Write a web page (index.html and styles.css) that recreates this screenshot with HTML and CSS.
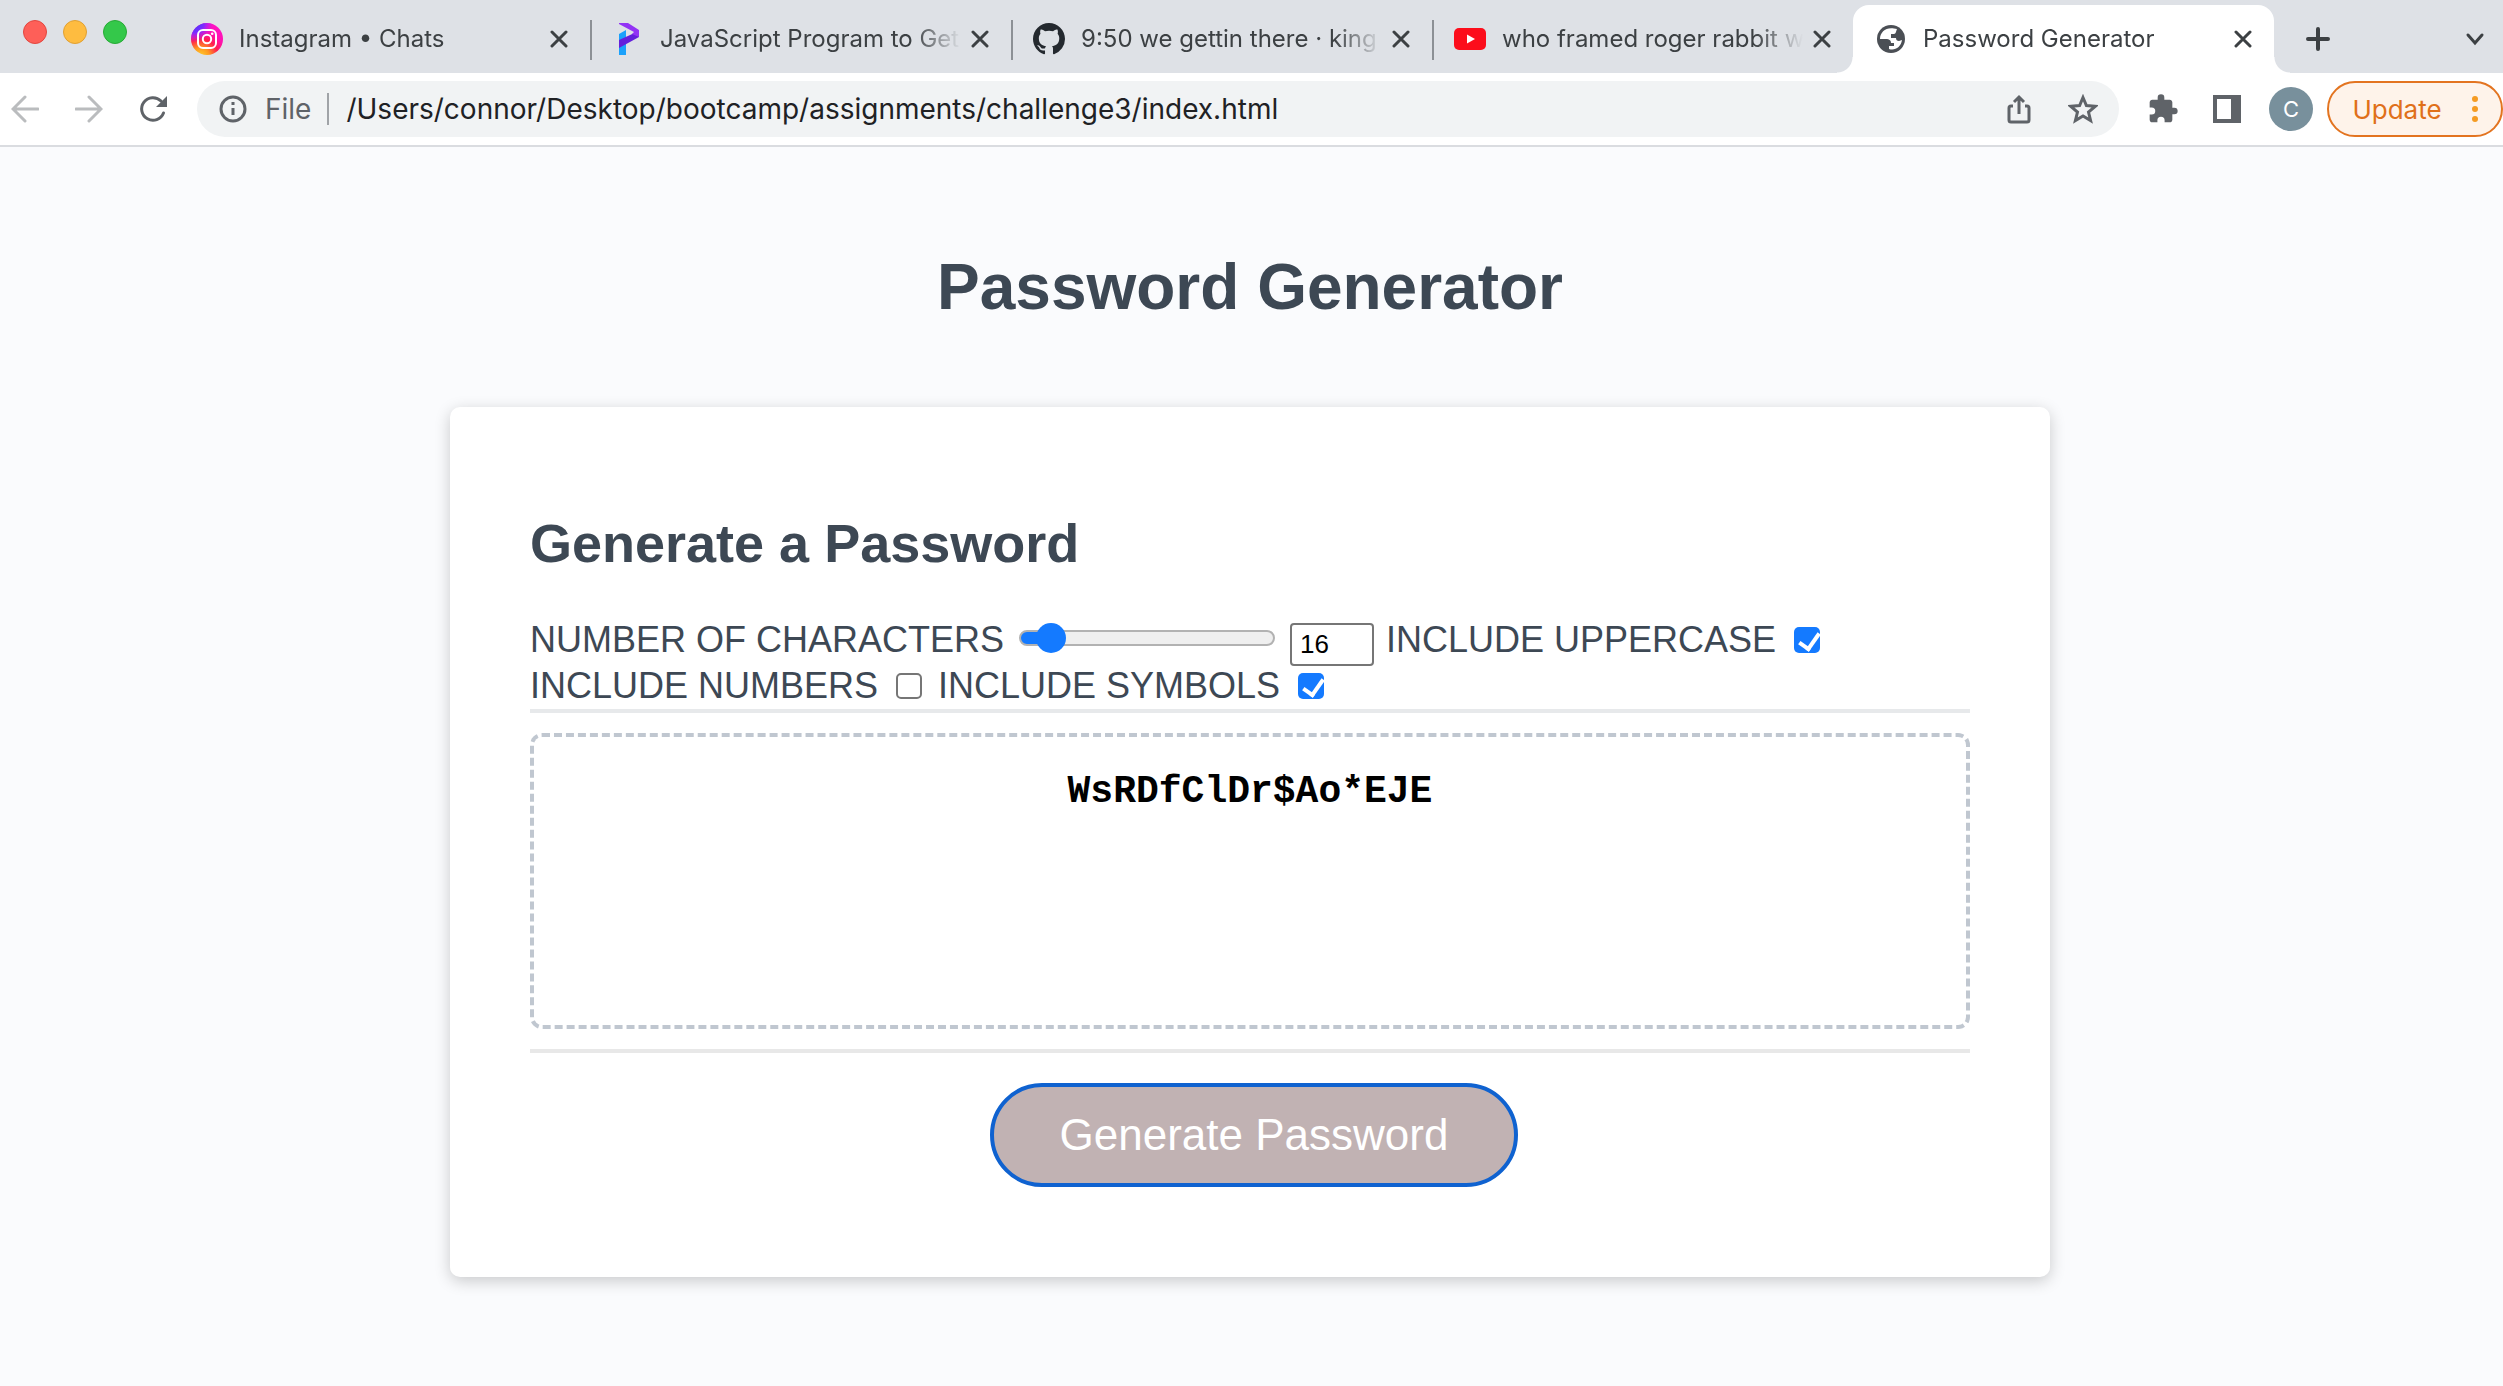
FILE: index.html
```html
<!DOCTYPE html>
<html lang="en">
<head>
<meta charset="utf-8">
<title>Password Generator</title>
<link rel="stylesheet" href="styles.css">
</head>
<body>
<header class="browser">
  <div class="tab-strip">
    <div class="window-buttons">
      <button class="light light-close" aria-label="Close window"></button>
      <button class="light light-min" aria-label="Minimize window"></button>
      <button class="light light-max" aria-label="Zoom window"></button>
    </div>
    <div class="tab">
      <svg class="favicon" viewBox="0 0 32 32" aria-hidden="true">
        <defs>
          <radialGradient id="ig" cx=".3" cy="1.05" r="1.1"><stop offset="0" stop-color="#ffd02f"/><stop offset=".25" stop-color="#ff9a1f"/><stop offset=".5" stop-color="#ff1e4e"/><stop offset=".72" stop-color="#ff12b0"/><stop offset="1" stop-color="#ff12c4"/></radialGradient>
          <radialGradient id="ig2" cx=".1" cy="0" r=".6"><stop offset="0" stop-color="#3a3cff"/><stop offset=".5" stop-color="#7a2cff"/><stop offset="1" stop-color="#c01cff" stop-opacity="0"/></radialGradient>
        </defs>
        <circle cx="16" cy="16" r="16" fill="url(#ig)"/><circle cx="16" cy="16" r="16" fill="url(#ig2)"/>
        <g fill="none" stroke="#fff" stroke-width="2"><rect x="7" y="7" width="18" height="18" rx="5"/><circle cx="16" cy="16" r="4.2"/></g><circle cx="21.2" cy="10.8" r="1.3" fill="#fff"/>
      </svg>
      <span class="tab-title">Instagram • Chats</span>
      <button class="tab-close" aria-label="Close tab"><svg viewBox="0 0 18 18"><path d="M2 2l14 14M16 2L2 16"/></svg></button>
    </div>
    <div class="tab">
      <svg class="favicon" viewBox="0 0 32 32" aria-hidden="true">
        <path d="M7 11l7-4v25H7z" fill="#1ba1fb"/><path d="M7 17l20-9v6L7 25z" fill="#641fdc"/><path d="M7 0h9l11 7v7l-7-3 2-2L7 1z" fill="#9333f5"/>
      </svg>
      <span class="tab-title">JavaScript Program to Get</span>
      <button class="tab-close" aria-label="Close tab"><svg viewBox="0 0 18 18"><path d="M2 2l14 14M16 2L2 16"/></svg></button>
    </div>
    <div class="tab">
      <svg class="favicon" viewBox="0 0 16 16" aria-hidden="true"><path fill="#24292f" d="M8 0C3.58 0 0 3.58 0 8c0 3.54 2.29 6.53 5.47 7.59.4.07.55-.17.55-.38 0-.19-.01-.82-.01-1.49-2.01.37-2.53-.49-2.69-.94-.09-.23-.48-.94-.82-1.13-.28-.15-.68-.52-.01-.53.63-.01 1.08.58 1.23.82.72 1.21 1.87.87 2.33.66.07-.52.28-.87.51-1.07-1.78-.2-3.64-.89-3.64-3.95 0-.87.31-1.59.82-2.15-.08-.2-.36-1.02.08-2.12 0 0 .67-.21 2.2.82.64-.18 1.32-.27 2-.27s1.36.09 2 .27c1.53-1.04 2.2-.82 2.2-.82.44 1.1.16 1.92.08 2.12.51.56.82 1.27.82 2.15 0 3.07-1.87 3.75-3.65 3.95.29.25.54.73.54 1.48 0 1.07-.01 1.93-.01 2.2 0 .21.15.46.55.38A8.01 8.01 0 0016 8c0-4.42-3.58-8-8-8z"/></svg>
      <span class="tab-title">9:50 we gettin there · king</span>
      <button class="tab-close" aria-label="Close tab"><svg viewBox="0 0 18 18"><path d="M2 2l14 14M16 2L2 16"/></svg></button>
    </div>
    <div class="tab">
      <svg class="favicon" viewBox="0 0 32 32" aria-hidden="true"><rect y="5" width="32" height="22" rx="5" fill="#fc0d1b"/><path d="M13 11.5v9l8-4.500z" fill="#fff"/></svg>
      <span class="tab-title">who framed roger rabbit w</span>
      <button class="tab-close" aria-label="Close tab"><svg viewBox="0 0 18 18"><path d="M2 2l14 14M16 2L2 16"/></svg></button>
    </div>
    <div class="tab tab-active">
      <svg class="favicon" viewBox="0 0 32 32" aria-hidden="true"><circle cx="16" cy="16" r="14" fill="#4b4f55"/><path d="M19 5.500C11 4 5 9 5 16h6c3 0 5 1 5 4h3v3h-5v3c6 2 12-2 13-9l-3 1c-2 0-3-1-3-3h-5v-4h3c2 0 2-3 3-5z" fill="#fff"/></svg>
      <span class="tab-title">Password Generator</span>
      <button class="tab-close" aria-label="Close tab"><svg viewBox="0 0 18 18"><path d="M2 2l14 14M16 2L2 16"/></svg></button>
    </div>
    <button class="new-tab" aria-label="New tab"><svg viewBox="0 0 24 24"><path d="M12 2v20M2 12h20"/></svg></button>
    <button class="tab-search" aria-label="Search tabs"><svg viewBox="0 0 20 14"><path d="M3 3l7 8 7-8"/></svg></button>
  </div>
  <div class="toolbar">
    <nav class="history">
      <button class="nav-off" aria-label="Back"><svg viewBox="0 0 28 28"><path d="M27 14H3M14 2L2 14l12 12"/></svg></button>
      <button class="nav-off" aria-label="Forward"><svg viewBox="0 0 28 28"><path d="M1 14h24M14 2l12 12-12 12"/></svg></button>
      <button class="nav-on" aria-label="Reload"><svg viewBox="0 0 28 28"><path d="M24.500 18A11.300 11.300 0 1 1 22 6" /><path class="solid" d="M28 1v11H17z"/></svg></button>
    </nav>
    <div class="omnibox">
      <svg class="info" viewBox="0 0 28 28" aria-hidden="true"><circle cx="14" cy="14" r="12"/><path d="M14 13v7M14 7v3"/></svg>
      <span class="scheme">File</span>
      <input class="url" type="text" aria-label="Address" value="/Users/connor/Desktop/bootcamp/assignments/challenge3/index.html">
      <button class="omni-action" aria-label="Share"><svg viewBox="0 0 30 30"><path d="M9 12H7q-2 0-2 2v12q0 2 2 2h16q2 0 2-2V14q0-2-2-2h-2M15 20V3M10 8l5-5 5 5"/></svg></button>
      <button class="omni-action" aria-label="Bookmark"><svg viewBox="0 0 30 30"><path d="M15 3.500l3.400 8.100 8.800.7-6.700 5.700 2.100 8.500-7.600-4.600-7.600 4.600 2.100-8.500-6.700-5.700 8.800-.7z"/></svg></button>
    </div>
    <button class="tool" aria-label="Extensions"><svg viewBox="0 0 24 24"><path class="solid" d="M20.500 11H19V7c0-1.100-.9-2-2-2h-4V3.500a2.500 2.500 0 0 0-5 0V5H4c-1.100 0-2 .9-2 2v3.800h1.500a2.700 2.700 0 0 1 0 5.400H2V20c0 1.100.9 2 2 2h3.800v-1.500a2.700 2.700 0 0 1 5.400 0V22H17c1.100 0 2-.9 2-2v-4h1.500a2.500 2.500 0 0 0 0-5z"/></svg></button>
    <button class="tool" aria-label="Side panel"><svg viewBox="0 0 28 28"><path class="solid" fill-rule="evenodd" d="M0 0h28v28H0zM4 4v20h14V4z"/></svg></button>
    <button class="avatar" aria-label="Profile">C</button>
    <button class="update">Update <svg viewBox="0 0 6 26" aria-hidden="true"><circle cx="3" cy="3" r="3"/><circle cx="3" cy="13" r="3"/><circle cx="3" cy="23" r="3"/></svg></button>
  </div>
</header>
<main class="page">
  <h1 class="title">Password Generator</h1>
  <section class="card">
    <h2 class="card-title">Generate a Password</h2>
    <form class="options">
      <div class="row">
        <label for="range">NUMBER OF CHARACTERS</label>
        <input class="slider" id="range" type="range" min="8" max="128" value="16">
        <input class="count" type="number" min="8" max="128" value="16" aria-label="Number of characters">
        <label for="upper">INCLUDE UPPERCASE</label>
        <input class="check" id="upper" type="checkbox" checked>
      </div>
      <div class="row">
        <label for="numbers">INCLUDE NUMBERS</label>
        <input class="check" id="numbers" type="checkbox">
        <label for="symbols">INCLUDE SYMBOLS</label>
        <input class="check" id="symbols" type="checkbox" checked>
      </div>
    </form>
    <div class="result">
      <textarea class="password" readonly aria-label="Your secure password">WsRDfClDr$Ao*EJE</textarea>
    </div>
    <div class="actions">
      <button class="generate">Generate Password</button>
    </div>
  </section>
</main>
</body>
</html>
```

FILE: styles.css
```css
* { box-sizing: border-box; }
body { margin: 0; min-height: 100vh; background: #fafbfd; font-family: "Liberation Sans", Arial, sans-serif; color: #3d4854; }
button, input, textarea { font: inherit; margin: 0; padding: 0; border: 0; background: none; color: inherit; }
button { display: flex; align-items: center; justify-content: center; flex: none; }
svg { display: block; flex: none; fill: none; stroke: currentColor; }
svg .solid { fill: currentColor; stroke: none; }

/* Browser window */
.browser { font-family: Inter, Roboto, sans-serif; color: #3c4043; }
.tab-strip { display: flex; align-items: flex-end; height: 73px; background: #dee1e6; }
.window-buttons { display: flex; flex: none; gap: 16px; align-self: flex-start; padding: 20px 0 0 23px; width: 169px; }
.light { width: 24px; height: 24px; border-radius: 50%; border: 1px solid; }
.light-close { background: #fe5f58; border-color: #e2463f; }
.light-min { background: #febc40; border-color: #e0a033; }
.light-max { background: #34c84a; border-color: #27aa35; }
.tab { display: flex; align-items: center; position: relative; flex: 0 1 421px; min-width: 0; height: 68px; padding: 0 22px; }
.tab + .tab::before { content: ""; position: absolute; left: 0; top: 15px; width: 2px; height: 40px; background: #8c9095; }
.favicon { width: 32px; height: 32px; margin-right: 16px; stroke: none; }
.tab-title { flex: 1; min-width: 0; font-size: 24px; line-height: 32px; white-space: nowrap; overflow: hidden; -webkit-mask-image: linear-gradient(to right, #000 calc(100% - 48px), transparent); mask-image: linear-gradient(to right, #000 calc(100% - 48px), transparent); }
.tab-close { width: 18px; height: 32px; margin-left: 10px; }
.tab-close svg { width: 18px; height: 18px; stroke-width: 3; stroke-linecap: round; }
.tab.tab-active { background: #fff; border-radius: 16px 16px 0 0; }
.tab.tab-active::before, .tab.tab-active::after { content: ""; position: absolute; top: auto; bottom: 0; width: 16px; height: 16px; }
.tab.tab-active::before { left: -16px; background: radial-gradient(circle at 0 0, #dee1e6 15px, #fff 16px); }
.tab.tab-active::after { right: -16px; background: radial-gradient(circle at 100% 0, #dee1e6 15px, #fff 16px); }
.new-tab { width: 24px; height: 68px; margin-left: 32px; }
.new-tab svg { width: 24px; height: 24px; stroke-width: 4; stroke-linecap: round; }
.tab-search { height: 68px; margin: 0 18px 0 auto; }
.tab-search svg { width: 20px; height: 14px; stroke-width: 3; stroke-linecap: round; }

.toolbar { display: flex; align-items: center; height: 74px; background: #fff; border-bottom: 2px solid #dadce0; }
.history { display: flex; gap: 36px; padding-left: 11px; width: 197px; flex: none; }
.history svg { width: 28px; height: 28px; stroke-width: 3; stroke-linecap: round; }
.nav-off { color: #babcbe; }
.nav-on { color: #5f6368; }
.omnibox { display: flex; align-items: center; flex: 1; min-width: 0; height: 56px; padding: 0 21px 0 22px; border-radius: 28px; background: #f1f3f4; font-size: 28px; color: #5f6368; }
.info { width: 28px; height: 28px; stroke-width: 3; margin-right: 18px; }
.scheme { padding-right: 16px; border-right: 2px solid #a0a3a7; line-height: 32px; }
.url { flex: 1; min-width: 0; height: 40px; padding-left: 17px; color: #202124; }
.omni-action { margin-left: 34px; }
.omni-action svg { width: 30px; height: 30px; stroke-width: 3; stroke-linejoin: miter; }
.tool { margin-left: 28px; color: #5f6368; }
.tool svg { width: 32px; height: 32px; }
.tool + .tool { margin-left: 34px; }
.tool + .tool svg { width: 28px; height: 28px; }
.avatar { width: 44px; height: 44px; margin: 0 14px 0 28px; border-radius: 50%; background: #78909c; color: #fff; font-size: 22px; }
.update { height: 56px; width: 176px; gap: 30px; border: 2px solid #e37420; border-radius: 28px; background: #fef3ea; color: #e0701a; font-size: 26px; }
.update svg { width: 6px; height: 26px; fill: #f59b23; stroke: none; }

/* Generator page */
.page { padding: 96px 43px 40px 40px; }
.title { margin: 0 0 76px; font-size: 64px; line-height: 88px; text-align: center; }
.card { max-width: 1600px; margin: 0 auto; padding: 102px 80px 90px; background: #fff; border-radius: 10px; box-shadow: 0 4px 16px rgba(0, 0, 0, .2); }
.card-title { margin: 0; font-size: 54px; line-height: 68px; }
.options { padding-top: 40px; border-bottom: 4px solid #e7e9eb; font-size: 36px; line-height: 46px; }
.row { display: flex; align-items: center; height: 46px; }
.slider { appearance: none; width: 256px; height: 30px; margin: 0 15px 4px; }
.slider::-webkit-slider-runnable-track { height: 16px; border: 2px solid #b2b2b2; border-radius: 8px; background: linear-gradient(to right, #147aff 30px, #efefef 30px); }
.slider::-webkit-slider-thumb { appearance: none; width: 30px; height: 30px; margin-top: -9px; border-radius: 50%; background: #147aff; }
.count { flex: none; width: 84px; height: 43px; margin: 8px 12px 0 0; padding-left: 8px; border: 2px solid #767676; border-radius: 4px; background: #fff; color: #000; font-size: 26px; }
.check { appearance: none; flex: none; width: 26px; height: 26px; margin: 0 16px 0 18px; border: 2px solid #767676; border-radius: 5px; background: #fff; }
.check:checked { border: 0; background: #147aff; }
.check:checked::after { content: ""; display: block; width: 9px; height: 17px; margin: 2px 0 0 9px; border: solid #fff; border-width: 0 4px 4px 0; transform: rotate(35deg); }
.result { padding: 20px 0; border-bottom: 4px solid #e8e8e8; }
.password { display: block; width: 100%; height: 296px; padding: 32px; border: 4px dashed #c0c7d0; border-radius: 12px; resize: none; color: #000; font: bold 38px/46px "Liberation Mono", "Courier New", monospace; text-align: center; }
.actions { display: flex; justify-content: center; padding: 30px 0 0 8px; }
.generate { height: 104px; padding: 0 66px; border: 4px solid #0f62d0; border-radius: 52px; background: #c1b2b3; color: #fff; font-size: 44px; }
```
